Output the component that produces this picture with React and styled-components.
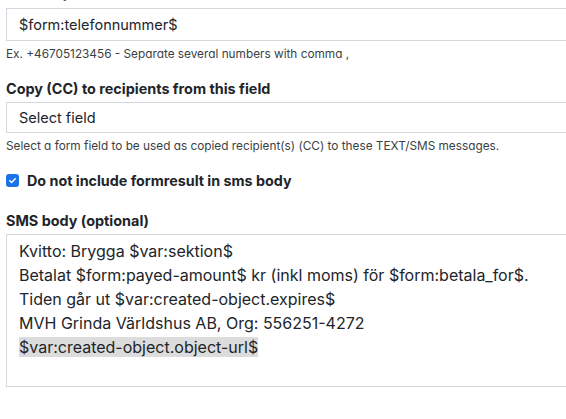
import React from "react";
import styled, { createGlobalStyle } from "styled-components";

const Global = createGlobalStyle`
  body {
    margin: 0;
    background: #fff;
    overflow: hidden;
    font-family: Inter, "Liberation Sans", sans-serif;
    color: #212529;
  }
`;

const Form = styled.div`
  width: 640px;
  padding: 0 0 0 6px;
  margin-top: -16px;
`;

const Group = styled.div`
  margin-bottom: ${(p) => p.$gap || "20px"};
`;

const Label = styled.label`
  display: block;
  font-size: 14.4px;
  font-weight: 700;
  line-height: 17px;
  margin-bottom: ${(p) => p.$mb || "5px"};
  color: #212529;
`;

const Input = styled.div`
  box-sizing: border-box;
  height: ${(p) => p.$h || "33px"};
  border: 1px solid #d3d8de;
  padding: 0 12px;
  display: flex;
  align-items: center;
  font-size: 14.5px;
  color: #212529;
  background: #fff;
`;

const Help = styled.div`
  margin-top: 6px;
  font-size: 11.8px;
  line-height: 14px;
  color: #3a3f44;
  font-feature-settings: "cv11";
`;

const CheckRow = styled.label`
  display: flex;
  align-items: center;
  gap: 8px;
  font-size: 14.3px;
  font-weight: 700;
`;

const Box = styled.span`
  width: 13px;
  height: 13px;
  border-radius: 3px;
  background: #1a73e8;
  display: flex;
  align-items: center;
  justify-content: center;
`;

const Area = styled.div`
  box-sizing: border-box;
  height: 153px;
  border: 1px solid #d3d8de;
  padding: 4px 12px;
  font-size: 16px;
  line-height: 24px;
  color: #212529;
`;

const Mark = styled.span`
  background: #dcdcdc;
`;

export default function App() {
  return (
    <>
      <Global />
      <Form>
        <Group $gap="19px">
          <Label $mb="7px">Send to phone number(s)</Label>
          <Input>$form:telefonnummer$</Input>
          <Help>Ex. +46705123456 - Separate several numbers with comma ,</Help>
        </Group>
        <Group $gap="19px">
          <Label>Copy (CC) to recipients from this field</Label>
          <Input $h="31px">Select field</Input>
          <Help>Select a form field to be used as copied recipient(s) (CC) to these TEXT/SMS messages.</Help>
        </Group>
        <Group $gap="23px">
          <CheckRow>
            <Box>
              <svg width="9" height="9" viewBox="0 0 10 10">
                <path d="M2 5.2l2 2L8 3" fill="none" stroke="#fff" strokeWidth="1.6" strokeLinecap="round" strokeLinejoin="round" />
              </svg>
            </Box>
            Do not include formresult in sms body
          </CheckRow>
        </Group>
        <Group>
          <Label>SMS body (optional)</Label>
          <Area>
            Kvitto: Brygga $var:sektion$
            <br />
            Betalat $form:payed-amount$ kr (inkl moms) för $form:betala_for$.
            <br />
            Tiden går ut $var:created-object.expires$
            <br />
            MVH Grinda Världshus AB, Org: 556251-4272
            <br />
            <Mark>$var:created-object.object-url$</Mark>
          </Area>
        </Group>
      </Form>
    </>
  );
}
